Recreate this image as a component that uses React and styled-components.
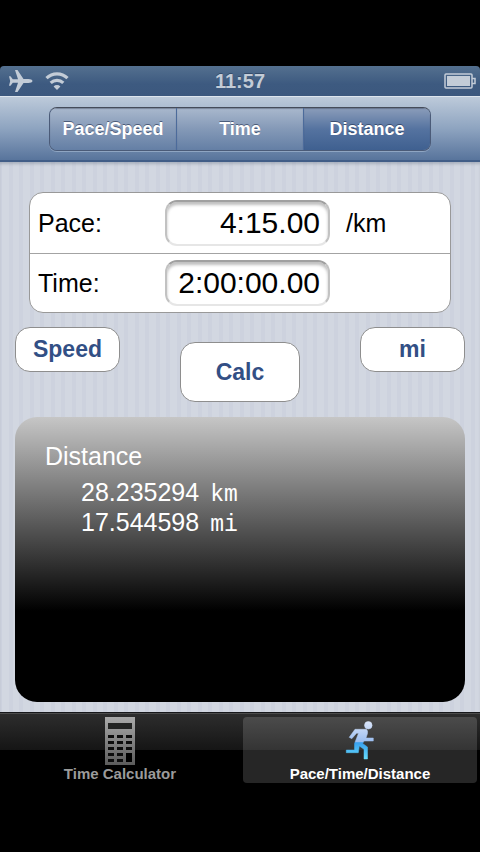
import React from 'react';
import styled, { createGlobalStyle } from 'styled-components';

const GlobalStyle = createGlobalStyle`
  * {
    box-sizing: border-box;
  }
  body {
    margin: 0;
    background: #000000;
    font-family: 'Liberation Sans', Arial, sans-serif;
  }
  button,
  input {
    margin: 0;
    padding: 0;
    font-family: inherit;
  }
`;

const Screen = styled.div`
  display: flex;
  flex-direction: column;
  min-height: 100vh;
  padding: 66px 0;
  background: #000000;
`;

const StatusBar = styled.div`
  display: grid;
  grid-template-columns: 1fr auto 1fr;
  align-items: center;
  height: 30px;
  padding: 0 4px;
  border-radius: 4px 4px 0 0;
  background: linear-gradient(#54708f, #3d5a80 60%, #3c587e);
`;

const StatusIcons = styled.div`
  display: flex;
  align-items: center;
  gap: 11px;
  padding-left: 4px;
  justify-content: ${(props) => (props.$end ? 'flex-end' : 'flex-start')};
`;

const Clock = styled.span`
  font-size: 20px;
  line-height: 30px;
  font-weight: 700;
  color: #c3ccd7;
  text-shadow: 0 -1px 0 #354c6b;
`;

const Header = styled.header`
  display: flex;
  justify-content: center;
  height: 66px;
  padding: 10px 49px 0;
  border-top: 1px solid #dde5ee;
  border-bottom: 2px solid #415d87;
  background: linear-gradient(#bdcada, #8ea4c0 50%, #58749c);
`;

const Segments = styled.div`
  display: flex;
  flex: 1;
  height: 44px;
  border: 1px solid #4b5b78;
  border-top-color: #454c5a;
  border-radius: 8px;
  overflow: hidden;
  box-shadow: 0 1px 0 #8fa5c2;
`;

const Segment = styled.button`
  flex: 1;
  border: 0;
  border-left: ${(props) => (props.$first ? '0' : '1px solid #4c6b9b')};
  background: ${(props) =>
    props.$active
      ? 'linear-gradient(#8b9dba, #5573a0 50%, #3f6090)'
      : 'linear-gradient(#a9b8cd, #8499b7 50%, #647fa5)'};
  box-shadow: inset 0 1px 1px rgba(50, 60, 80, 0.4);
  font-size: 18px;
  font-weight: 700;
  color: #ffffff;
  text-shadow: 0 -1px 0 rgba(30, 45, 75, 0.6);
`;

const Content = styled.main`
  flex: 1;
  display: flex;
  flex-direction: column;
  padding: 30px 15px 10px;
  box-shadow: inset 0 3px 3px -1px rgba(110, 120, 140, 0.4);
  background: repeating-linear-gradient(
    90deg,
    #cdd2de 0 2px,
    #d2d7e1 2px 9px,
    #cdd2de 9px 13px,
    #d2d7e1 13px 19px,
    #cdd2de 19px 21px
  );
`;

const Fields = styled.div`
  margin: 0 14px;
  border: 1px solid #999999;
  border-radius: 14px;
  background: #ffffff;
`;

const FieldRow = styled.div`
  display: grid;
  grid-template-columns: 127px 165px 1fr;
  align-items: center;
  height: 60px;
  padding-left: 8px;

  & + & {
    height: 59px;
    border-top: 1px solid #a3a3a3;
  }
`;

const Label = styled.label`
  font-size: 25px;
  line-height: 30px;
  color: #000000;
`;

const Unit = styled.span`
  padding-left: 16px;
  font-size: 25px;
  line-height: 30px;
`;

const TimeInput = styled.input`
  width: 100%;
  height: 46px;
  padding: 0 8px;
  border: 2px solid #c2c2c2;
  border-top-color: #a0a0a0;
  border-bottom-color: #e6e6e6;
  border-radius: 12px;
  background: #ffffff;
  box-shadow: inset 0 3px 3px rgba(0, 0, 0, 0.25);
  font-size: 30px;
  text-align: right;
  color: #000000;
  outline: none;
`;

const Actions = styled.div`
  display: flex;
  justify-content: space-between;
  align-items: flex-start;
  height: 75px;
  margin: 14px 0 15px;
`;

const ActionButton = styled.button`
  width: ${(props) => (props.$large ? '120px' : '105px')};
  height: ${(props) => (props.$large ? '60px' : '45px')};
  align-self: ${(props) => (props.$large ? 'flex-end' : 'flex-start')};
  border: 1px solid #8e8e8e;
  border-radius: 15px;
  background: #ffffff;
  font-size: 23px;
  font-weight: 700;
  color: #324f85;
`;

const Result = styled.section`
  flex: 1;
  padding: 24px 30px;
  border-radius: 22px;
  background: linear-gradient(#c6c6c6, #000000 68%);
  color: #ffffff;
`;

const ResultTitle = styled.h2`
  margin: 0 0 6px;
  font-size: 25px;
  line-height: 30px;
  font-weight: 400;
`;

const ResultLine = styled.p`
  margin: 0;
  padding-left: 36px;
  font-size: 25px;
  line-height: 30px;
`;

const ResultUnit = styled.span`
  padding-left: 4px;
  font-family: 'Liberation Mono', 'Courier New', monospace;
  font-size: 23px;
  line-height: 20px;
`;

const TabBar = styled.nav`
  display: flex;
  height: 74px;
  border-top: 1px solid #17181b;
  box-shadow: inset 0 1px 0 #4c4c4c;
  background: linear-gradient(#2e2e2e, #151515 37px, #000000 37px);
`;

const Tab = styled.button`
  flex: 1;
  display: flex;
  flex-direction: column;
  align-items: center;
  height: 66px;
  margin: 4px 3px 3px;
  border: 0;
  border-radius: 4px;
  background: ${(props) =>
    props.$active
      ? 'linear-gradient(#4b4b4b, #343434 33px, #262626 33px)'
      : 'transparent'};
  font-size: 15px;
  line-height: 18px;
  font-weight: 700;
  color: ${(props) => (props.$active ? '#ffffff' : '#9b9b9b')};
`;

const TabIcon = styled.span`
  display: flex;
  height: 50px;
`;

const PlaneIcon = () => (
  <svg width="25" height="24" viewBox="0 0 25 24" fill="#c3ccd7">
    <path d="M24.500 12c0-1.200-2-2-4-2h-5L9.500 1H7l3 9.200H4.800L2.500 7.200H1L2.200 12 1 16.800h1.500l2.300-3H10L7 23h2.500l6-9h5c2 0 4-.8 4-2z" />
  </svg>
);

const WifiIcon = () => (
  <svg width="26" height="20" viewBox="0 0 26 20">
    <g fill="none" stroke="#c3ccd7" strokeWidth="3.200">
      <path d="M2.500 7.200a15 15 0 0 1 21 0" />
      <path d="M6.700 11.800a9.200 9.200 0 0 1 12.600 0" />
    </g>
    <path d="M13 19l-3.400-3.600a4.800 4.800 0 0 1 6.800 0z" fill="#c3ccd7" />
  </svg>
);

const BatteryIcon = () => (
  <svg width="32" height="16" viewBox="0 0 32 16">
    <rect x="1" y="1" width="27" height="14" rx="1" fill="none" stroke="#c3ccd7" strokeWidth="1.500" />
    <rect x="3" y="3" width="23" height="10" fill="#c3ccd7" />
    <path d="M28 5.500h3v5h-3" fill="none" stroke="#c3ccd7" strokeWidth="1.500" />
  </svg>
);

const keys = [18, 24, 30, 36, 42];

const CalculatorIcon = () => (
  <svg width="30" height="48" viewBox="0 0 30 48">
    <defs>
      <linearGradient id="calcFill" x1="0" y1="0" x2="0" y2="1">
        <stop offset="0" stopColor="#a9a9a9" />
        <stop offset="1" stopColor="#5c5c5c" />
      </linearGradient>
    </defs>
    <rect width="30" height="48" fill="url(#calcFill)" />
    <rect x="3" y="6" width="24" height="6" fill="#232423" />
    {keys.map((y) => (
      <g key={y} fill="#0d0d0d">
        <rect x="3" y={y} width="6" height="3" />
        <rect x="12" y={y} width="6" height="3" />
        {y < 36 && <rect x="21" y={y} width="6" height="3" />}
      </g>
    ))}
    <rect x="21" y="36" width="6" height="9" fill="#000000" />
  </svg>
);

const RunnerIcon = () => (
  <svg width="32" height="44" viewBox="0 0 32 44">
    <defs>
      <linearGradient id="runFill" gradientUnits="userSpaceOnUse" x1="0" y1="4" x2="0" y2="42">
        <stop offset="0" stopColor="#dce6fa" />
        <stop offset="0.550" stopColor="#9abdf0" />
        <stop offset="0.570" stopColor="#38a0ef" />
        <stop offset="1" stopColor="#66dcfb" />
      </linearGradient>
    </defs>
    <g fill="url(#runFill)" stroke="url(#runFill)" strokeWidth="0.500" strokeLinejoin="round">
      <circle cx="24.300" cy="8.300" r="3.800" />
      <path d="M11 12.300H22.500L23.500 14V16.500L22 21H29.300V24H20L18.700 26.500L23.500 30V42H20V32.300L15.300 29L14.300 35.700H2.300V33H10.500V26.500L14.500 16.300H12.500L7.800 21.700L5.200 20.300Z" />
    </g>
  </svg>
);

const App = () => {
  return (
    <>
      <GlobalStyle />
      <Screen>
        <StatusBar>
          <StatusIcons>
            <PlaneIcon />
            <WifiIcon />
          </StatusIcons>
          <Clock>11:57</Clock>
          <StatusIcons $end>
            <BatteryIcon />
          </StatusIcons>
        </StatusBar>
        <Header>
          <Segments>
            <Segment $first>Pace/Speed</Segment>
            <Segment>Time</Segment>
            <Segment $active>Distance</Segment>
          </Segments>
        </Header>
        <Content>
          <Fields>
            <FieldRow>
              <Label htmlFor="pace">Pace:</Label>
              <TimeInput id="pace" type="text" defaultValue="4:15.00" />
              <Unit>/km</Unit>
            </FieldRow>
            <FieldRow>
              <Label htmlFor="time">Time:</Label>
              <TimeInput id="time" type="text" defaultValue="2:00:00.00" />
            </FieldRow>
          </Fields>
          <Actions>
            <ActionButton>Speed</ActionButton>
            <ActionButton $large>Calc</ActionButton>
            <ActionButton>mi</ActionButton>
          </Actions>
          <Result>
            <ResultTitle>Distance</ResultTitle>
            <ResultLine>
              28.235294 <ResultUnit>km</ResultUnit>
            </ResultLine>
            <ResultLine>
              17.544598 <ResultUnit>mi</ResultUnit>
            </ResultLine>
          </Result>
        </Content>
        <TabBar>
          <Tab>
            <TabIcon>
              <CalculatorIcon />
            </TabIcon>
            Time Calculator
          </Tab>
          <Tab $active>
            <TabIcon>
              <RunnerIcon />
            </TabIcon>
            Pace/Time/Distance
          </Tab>
        </TabBar>
      </Screen>
    </>
  );
};

export default App;
